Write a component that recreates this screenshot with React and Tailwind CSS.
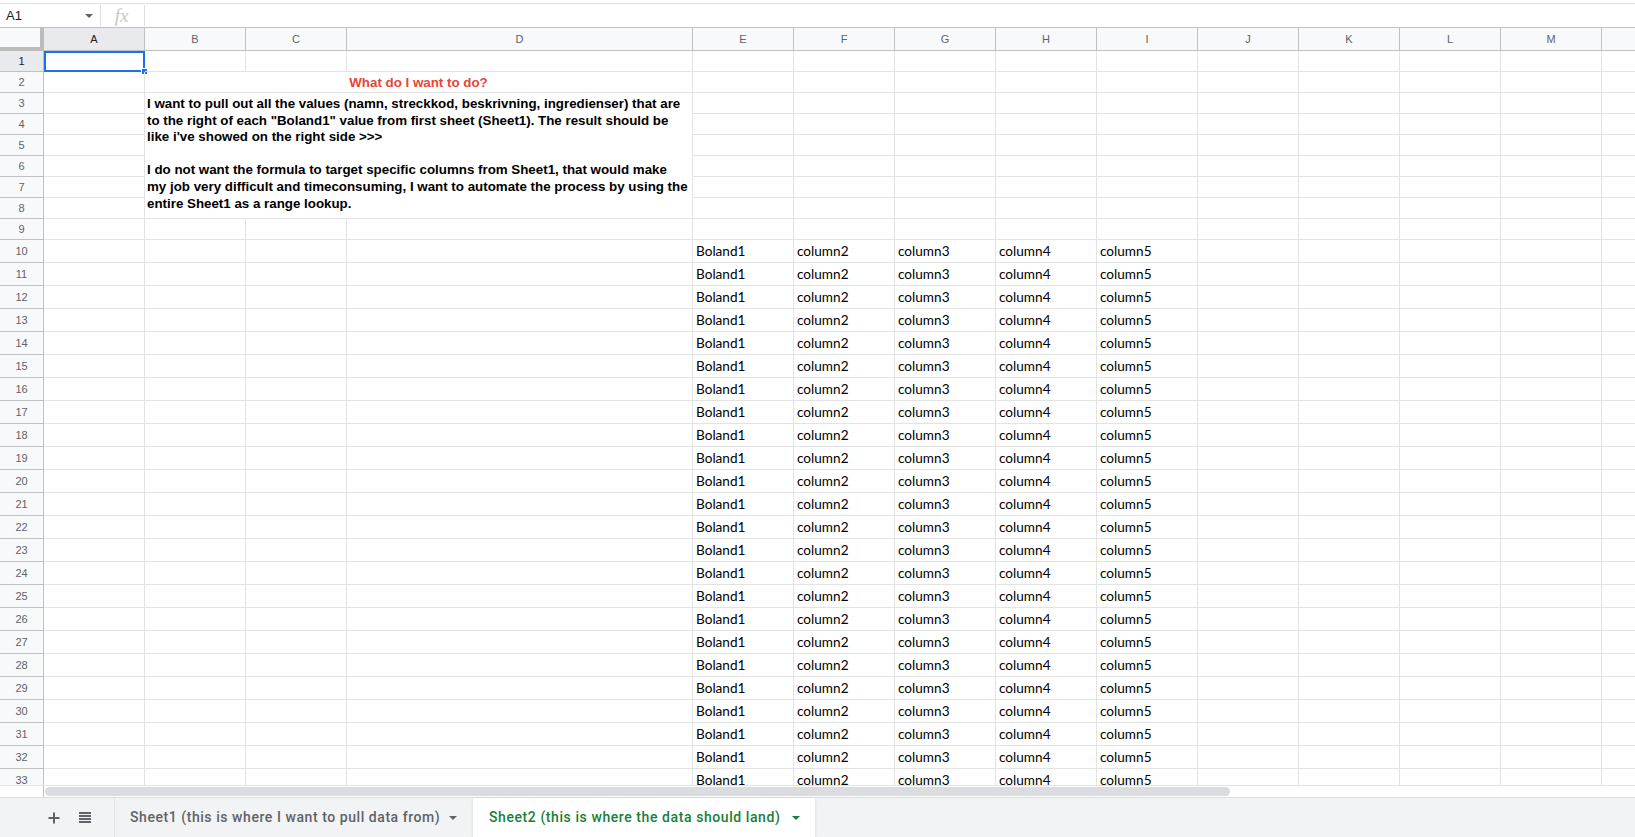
import React from "react";

const COLS = ["A", "B", "C", "D", "E", "F", "G", "H", "I", "J", "K", "L", "M", "N"];
const DATA = ["Boland1", "column2", "column3", "column4", "column5"];
const ROWS = Array.from({ length: 33 }, (_, i) => i + 1);

// wrapped the same way the merged cell wraps in the sheet
const NOTE_LINES = [
  "I want to pull out all the values (namn, streckkod, beskrivning, ingredienser) that are",
  "to the right of each \"Boland1\" value from first sheet (Sheet1). The result should be",
  "like i've showed on the right side >>>",
  "",
  "I do not want the formula to target specific columns from Sheet1, that would make",
  "my job very difficult and timeconsuming, I want to automate the process by using the",
  "entire Sheet1 as a range lookup.",
];

const grid = "border-r border-b border-[#e2e3e3]";
const head = "border-r border-b border-[#c0c0c0] flex items-center justify-center text-[11px] text-[#5f6368]";

const Caret = ({ color = "#5f6368" }) => (
  <svg width="8" height="4" viewBox="0 0 8 4">
    <path d="M0 0h8L4 4z" fill={color} />
  </svg>
);

const RowCells = ({ r }) => {
  const cells = [];
  cells.push(
    <div key="h" className={`${head} ${r === 1 ? "bg-[#e8eaed] text-[#202124]" : "bg-[#f8f9fa]"}`}>
      {r}
    </div>
  );

  COLS.forEach((c, ci) => {
    // merged B2:D2 and B3:D8
    if (r === 2 && (c === "C" || c === "D")) return;
    if (r >= 3 && r <= 8 && ["B", "C", "D"].includes(c)) {
      if (r === 3 && c === "B") {
        cells.push(
          <div
            key={c}
            className={`${grid} col-span-3 row-span-6 pl-[2px] pt-[3px] font-bold text-[13.33px] leading-[16.6px] text-black`}
          >
            {NOTE_LINES.map((l, i) => (
              <div key={i} className="whitespace-nowrap h-[16.6px]">
                {l}
              </div>
            ))}
          </div>
        );
      }
      return;
    }
    if (r === 2 && c === "B") {
      cells.push(
        <div
          key={c}
          className={`${grid} col-span-3 flex items-end justify-center pb-[3px] font-bold text-[13.33px] leading-none text-[#ea4335]`}
        >
          What do I want to do?
        </div>
      );
      return;
    }
    const di = ci - 4;
    const text = r >= 10 && di >= 0 && di < 5 ? DATA[di] : "";
    cells.push(
      <div
        key={c}
        className={`${grid} relative flex items-end pl-[3px] pb-[3px] font-['Lato',sans-serif] text-[13.6px] leading-none text-black whitespace-nowrap`}
      >
        {text}
        {r === 1 && c === "A" && (
          <div className="absolute left-0 top-0 right-[-1px] bottom-[-1px] border-2 border-[#1a73e8]">
            <div className="absolute right-[-5px] bottom-[-5px] w-[7px] h-[7px] bg-[#1a73e8] border border-white" />
          </div>
        )}
      </div>
    );
  });
  return cells;
};

export default function App() {
  return (
    <div className="w-[1635px] h-[837px] overflow-hidden bg-white flex flex-col font-['Liberation_Sans',Arial,sans-serif]">
      <div className="h-[3px]" />

      {/* formula bar */}
      <div className="h-[24px] border-t border-[#e0e0e0] flex items-stretch">
        <div className="w-[101px] flex items-center">
          <span className="pl-[6px] text-[13px] text-[#202124] flex-1">A1</span>
          <span className="mr-[7px] mt-[1px]">
            <Caret />
          </span>
          <div className="w-px self-stretch my-[1px] bg-[#e0e0e0]" />
        </div>
        <div className="w-[44px] flex items-center">
          <span className="flex-1 text-center font-['Liberation_Serif',serif] italic text-[19px] leading-none text-[#c4c7c5] pr-[2px]">
            fx
          </span>
          <div className="w-px self-stretch my-[1px] bg-[#e0e0e0]" />
        </div>
        <div className="flex-1" />
      </div>

      {/* grid */}
      <div className="h-[758px] overflow-hidden">
        <div className="w-[1702px] grid grid-cols-[44px_101px_101px_101px_346px_repeat(10,101px)] grid-rows-[24px_repeat(9,21px)_repeat(24,23px)]">
          <div className="bg-[#f8f9fa] border-t border-[#c0c0c0] border-r-4 border-b-4 border-r-[#bdbdbd] border-b-[#bdbdbd]" />
          {COLS.map((c) => (
            <div
              key={c}
              className={`${head} border-t ${c === "A" ? "bg-[#e8eaed] text-[#202124]" : "bg-[#f8f9fa]"}`}
            >
              {c}
            </div>
          ))}
          {ROWS.map((r) => (
            <RowCells key={r} r={r} />
          ))}
        </div>
      </div>

      {/* horizontal scrollbar */}
      <div className="h-[12px] border-t border-[#e2e3e3] flex">
        <div className="w-[44px] border-r border-[#c0c0c0]" />
        <div className="flex-1 pt-[1px] pl-[1px]">
          <div className="w-[1185px] h-[9px] rounded-full bg-[#dadce0]" />
        </div>
      </div>

      {/* sheet tabs */}
      <div className="h-[40px] border-t border-[#dadce0] bg-[#f1f3f4] flex items-stretch font-['Roboto',sans-serif] font-medium text-[14px]">
        <div className="w-[115px] flex items-center border-r border-[#e3e5e8]">
          <svg className="ml-[48px]" width="12" height="12" viewBox="0 0 12 12">
            <path d="M6 0.5v11M0.5 6h11" stroke="#5f6368" strokeWidth="2" />
          </svg>
          <svg className="ml-[19px]" width="12" height="11" viewBox="0 0 12 11">
            <rect x="0" y="0" width="12" height="2" fill="#5f6368" />
            <rect x="0" y="3" width="12" height="2" fill="#5f6368" />
            <rect x="0" y="6" width="12" height="2" fill="#5f6368" />
            <rect x="0" y="9" width="12" height="2" fill="#5f6368" />
          </svg>
        </div>
        <div className="w-[358px] flex items-center pl-[15px] text-[#5f6368] tracking-[0.56px]">
          <span>Sheet1 (this is where I want to pull data from)</span>
          <span className="ml-[9px]">
            <Caret />
          </span>
        </div>
        <div className="w-[342px] flex items-center pl-[16px] bg-white text-[#188038] tracking-[0.58px] shadow-[0_1px_3px_rgba(60,64,67,0.15)]">
          <span>Sheet2 (this is where the data should land)</span>
          <span className="ml-[12px]">
            <Caret color="#188038" />
          </span>
        </div>
        <div className="flex-1" />
      </div>
    </div>
  );
}
